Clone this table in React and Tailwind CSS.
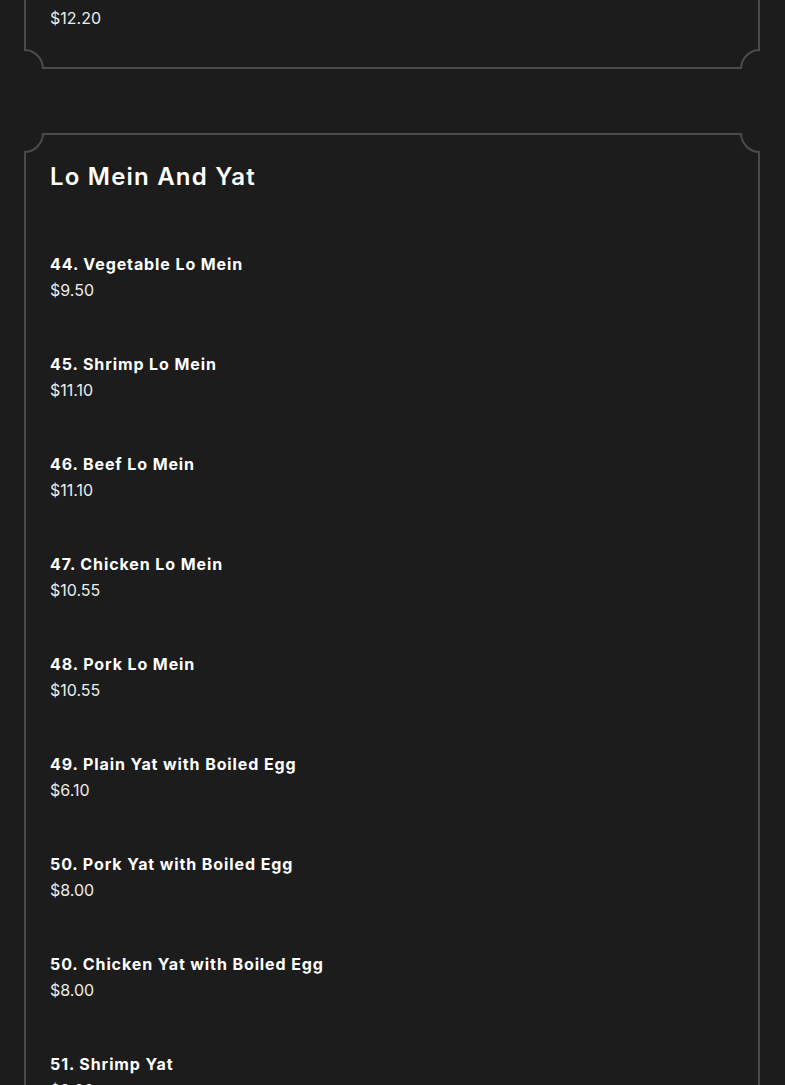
import React from "react";

const items = [
  { name: "44. Vegetable Lo Mein", price: "$9.50" },
  { name: "45. Shrimp Lo Mein", price: "$11.10" },
  { name: "46. Beef Lo Mein", price: "$11.10" },
  { name: "47. Chicken Lo Mein", price: "$10.55" },
  { name: "48. Pork Lo Mein", price: "$10.55" },
  { name: "49. Plain Yat with Boiled Egg", price: "$6.10" },
  { name: "50. Pork Yat with Boiled Egg", price: "$8.00" },
  { name: "50. Chicken Yat with Boiled Egg", price: "$8.00" },
  { name: "51. Shrimp Yat", price: "$9.00" },
];

// scalloped corner: page-coloured square over the border, with a quarter ring
const Corner = ({ pos, ring }) => (
  <div className={`absolute w-[20px] h-[20px] overflow-hidden bg-[#1c1c1c] ${pos}`}>
    <div className={`absolute w-[40px] h-[40px] rounded-full border-2 border-[#4b4b4b] ${ring}`} />
  </div>
);

const Frame = ({ className, children }) => (
  <div className={`relative border-2 border-[#4b4b4b] ${className}`}>
    <Corner pos="-top-[2px] -left-[2px]" ring="-top-[20px] -left-[20px]" />
    <Corner pos="-top-[2px] -right-[2px]" ring="-top-[20px] -right-[20px]" />
    <Corner pos="-bottom-[2px] -left-[2px]" ring="-bottom-[20px] -left-[20px]" />
    <Corner pos="-bottom-[2px] -right-[2px]" ring="-bottom-[20px] -right-[20px]" />
    {children}
  </div>
);

export default function App() {
  return (
    <div
      className="min-h-screen bg-[#1c1c1c] pl-[24px] pr-[25px] overflow-hidden text-white"
      style={{ fontFamily: "Inter, 'Open Sans', sans-serif" }}
    >
      <Frame className="-mt-[50px] pt-[53px] pb-[36px] px-[24px]">
        <p className="text-[16px] leading-[26px] text-[#ececec]">$12.20</p>
      </Frame>

      <Frame className="mt-[64px] pt-[26px] px-[24px] pb-[40px]">
        <h2 className="text-[24px] leading-[32px] font-semibold tracking-[1.2px] mb-[34px]">
          Lo Mein And Yat
        </h2>
        <div className="flex flex-col">
          {items.map((it, i) => (
            <div key={i} className="py-[24px]">
              <p className="text-[16px] leading-[26px] font-bold tracking-[0.9px]">{it.name}</p>
              <p className="text-[16px] leading-[26px] text-[#ececec]">{it.price}</p>
            </div>
          ))}
        </div>
      </Frame>
    </div>
  );
}
